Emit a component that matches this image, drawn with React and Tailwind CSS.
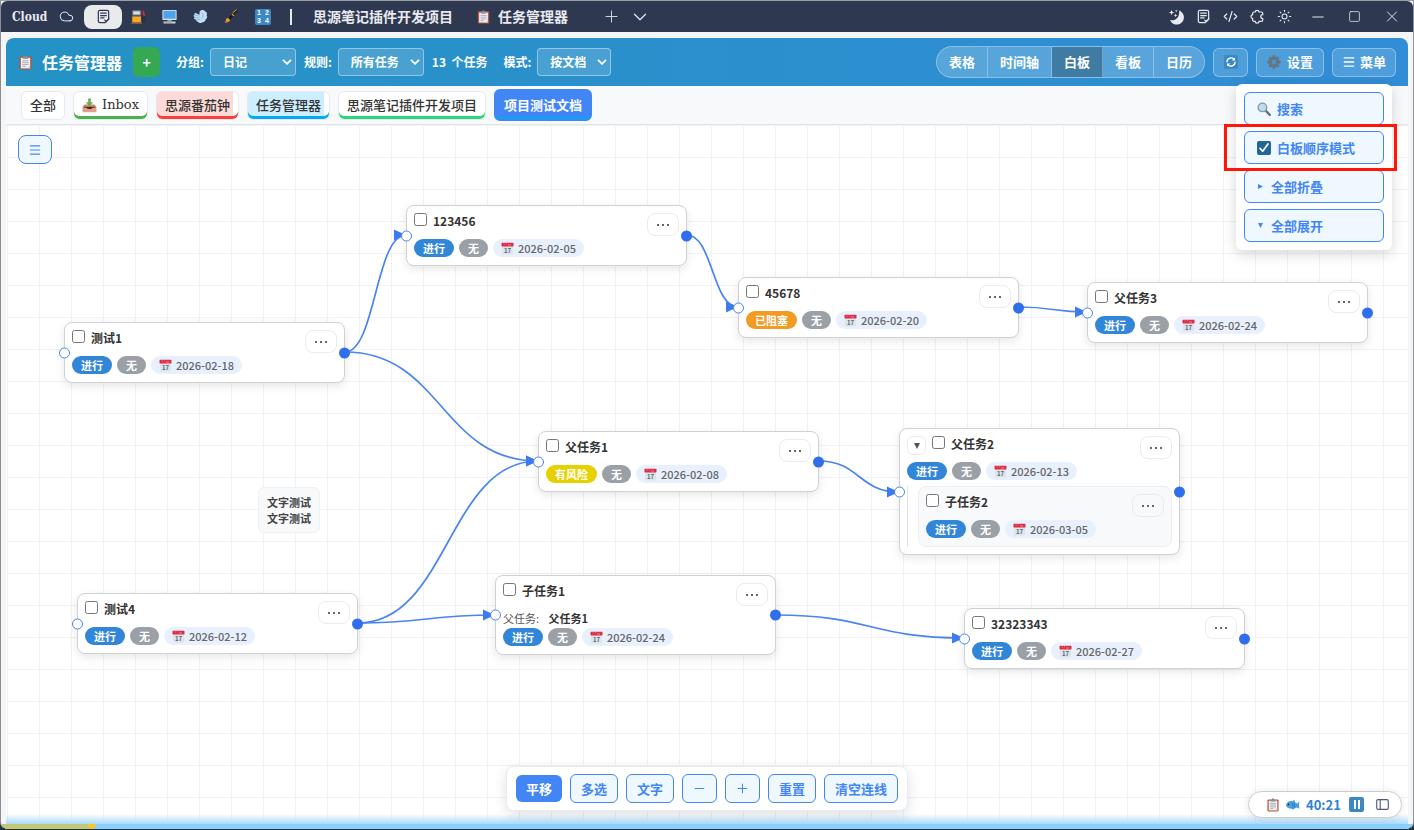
import React from 'react';
import { Cloud, Plus, ChevronDown, X, CodeXml, Sun, Minus, Square, Menu } from 'lucide-react';

/* ---------- small pictograms ---------- */

function ClipboardIcon({ className }) {
  return (
    <svg viewBox="0 0 14 16" className={className} aria-hidden="true">
      <rect x="0.5" y="1.5" width="13" height="14" rx="1.2" fill="#b9553c" />
      <rect x="2" y="3" width="10" height="11.3" fill="#eef1f4" />
      <path d="M4.3 1.6h5.4v2.6H4.3z" fill="#8f9aa3" />
      <circle cx="7" cy="1.4" r="1.2" fill="#7b858d" />
      <path d="M3.6 6.2h6.8M3.6 8.2h6.8M3.6 10.2h6.8M3.6 12.2h3.6" stroke="#98a3ac" strokeWidth="0.9" />
      <path d="M9 14.3 12 11.4v2.9z" fill="#c9d1d8" />
    </svg>
  );
}

function FuelIcon() {
  return (
    <svg viewBox="0 0 16 16" className="size-[15px]" aria-hidden="true">
      <rect x="1" y="1" width="10" height="14" rx="0.8" fill="#4a4f55" />
      <rect x="1.8" y="1.8" width="8.4" height="4.8" fill="#9aa2a8" />
      <rect x="2.6" y="2.8" width="6.8" height="2.6" fill="#d8dde0" />
      <rect x="1.4" y="8" width="9.2" height="6.4" fill="#f8a72b" />
      <rect x="0.4" y="14.4" width="11.2" height="1.4" fill="#8a6a38" />
      <path d="M11 9h1.6v3.6c0 1.6 2 1.6 2 0V5.6L12.4 3" fill="none" stroke="#2b2f33" strokeWidth="1" />
      <path d="M12.2 3.2 13 1l2 4.6-.4 2-2-1z" fill="#d9283c" />
    </svg>
  );
}

function ComputerIcon() {
  return (
    <svg viewBox="0 0 16 16" className="size-[15px]" aria-hidden="true">
      <rect x="0.4" y="1" width="15.2" height="10.6" rx="0.8" fill="#d6e1ea" />
      <rect x="1.5" y="2" width="13" height="8.3" fill="#4ba3ea" />
      <path d="M6 11.6h4l.7 1.6H5.3z" fill="#93a2ad" />
      <rect x="1.5" y="13.2" width="13" height="2.2" rx="0.4" fill="#c7d3dc" />
      <path d="M2.4 14.3h8" stroke="#8c9ba6" strokeWidth="0.7" />
    </svg>
  );
}

function WindIcon() {
  return (
    <svg viewBox="0 0 16 16" className="size-[15px]" aria-hidden="true">
      <path d="M7 3C8 .8 11.400.4 13 2.600c1.800.6 2.400 2.400 1.600 4 1 1.800.4 3.800-1.200 4.600-.4 2-1.800 3-3.400 2.800-1.400 1.400-3.800 1.200-4.600-.4-1.400-.2-2-1-1.800-2L1.600 10.600C.6 10.200.8 9 1.800 9L.9 7.800C.2 7 .8 6 1.800 6.400L1.600 5.400C1.400 4.400 2.400 4 3.200 4.600L7 6.200z" fill="#c3ddf3" />
      <path d="M1.800 9 7 9.600M1.600 6.400 7 7.600M3.600 11.600 8 11M9.600 4c1.400 1.200 1.600 4 .2 6" fill="none" stroke="#6fa6d6" strokeWidth="0.700" />
    </svg>
  );
}

function PenIcon() {
  return (
    <svg viewBox="0 0 16 16" className="size-[15px]" aria-hidden="true">
      <path d="M1 15.200 2.600 10 4.600 9.600 6.400 11.400 6 13z" fill="#eda622" />
      <path d="M1 15.200 4 12.200" stroke="#7a4d0a" strokeWidth="0.600" />
      <path d="M4.600 9.600 6.400 11.400 10.200 7.800 8.200 5.800z" fill="#17191d" />
      <path d="M8.200 5.800 10.200 7.800 11.200 6.800 9.200 4.800z" fill="#eda622" />
      <path d="M9.200 4.800 11.200 6.800 14.800 3C15.200 1.600 14.400.8 13 1.200z" fill="#23262b" />
      <path d="M9.600 3.800 13.200.9" stroke="#eda622" strokeWidth="1" strokeLinecap="round" />
    </svg>
  );
}

function NumbersIcon() {
  return (
    <span className="grid size-4 grid-cols-2 rounded-xs bg-[#3b88c3] text-center font-['Liberation_Sans',sans-serif] text-[7px] leading-[8px] font-bold text-white" aria-hidden="true">
      <span>1</span><span>2</span><span>3</span><span>4</span>
    </span>
  );
}

function InboxIcon() {
  return (
    <svg viewBox="0 0 16 16" className="size-[15px] shrink-0" aria-hidden="true">
      <path d="M0.800 9.400 2.600 7h10.800l1.800 2.400v5.200H.8z" fill="#c98b78" />
      <path d="M2 9.400h12V11H2z" fill="#713228" />
      <path d="M.8 10.400h3.800c.4 1.800 6.400 1.800 6.800 0h3.800v4.800H.8z" fill="#e0a090" />
      <path d="M4.800 9.600h6.400c0 3-6.400 3-6.400 0z" fill="#5b1f1a" />
      <path d="M6.600.6h2.800v4h2.400L8 9.200 4.200 4.600h2.400z" fill="#69ad57" />
    </svg>
  );
}

function DocIcon({ className }) {
  return (
    <svg viewBox="0 0 16 16" className={className} fill="none" stroke="currentColor" strokeWidth="1.300" strokeLinecap="round" strokeLinejoin="round" aria-hidden="true">
      <path d="M4 1.500h8a1.500 1.500 0 0 1 1.500 1.500v7.500L9.800 14.500H4A1.500 1.500 0 0 1 2.500 13V3A1.500 1.500 0 0 1 4 1.500z" />
      <path d="M5 4.500h6M5 7h6M5 9.500h3.500M9.400 12l1.600 1.500 2.800-3" />
    </svg>
  );
}

function MoonIcon() {
  return (
    <svg viewBox="0 0 16 16" className="size-4" fill="currentColor" aria-hidden="true">
      <path d="M11 1.500a7.200 7.200 0 1 1-9 9.500c5.800 1.600 10.200-3.700 9-9.500z" />
      <path d="M3.600.8l.7 2 2 .7-2 .7-.7 2-.7-2-2-.7 2-.7zM7.600 4.500l.5 1.400 1.400.5-1.400.5-.5 1.400-.5-1.400-1.400-.5 1.400-.5zM8.200.4l.4 1 1 .4-1 .4-.4 1-.4-1-1-.4 1-.4z" />
    </svg>
  );
}

function PluginIcon() {
  return (
    <svg viewBox="0 0 16 16" className="size-[15px]" fill="none" stroke="currentColor" strokeWidth="1.300" strokeLinejoin="round" aria-hidden="true">
      <path d="M5.600 3.200a2 1.800 0 0 1 4 0h2.400a1.600 1.600 0 0 1 1.600 1.600v1.200a2.100 2.100 0 0 0 0 4.200v1.400a1.600 1.600 0 0 1-1.600 1.600H9.600a2 1.800 0 0 1-4 0H4.400a1.600 1.600 0 0 1-1.600-1.600v-1.600a1.800 1.900 0 0 1 0-3.800V4.800a1.600 1.600 0 0 1 1.600-1.600z" />
    </svg>
  );
}

function GearIcon() {
  return (
    <svg viewBox="-8 -8 16 16" className="size-[14px]" aria-hidden="true">
      <g fill="#66757f">
        {[0, 45, 90, 135].map((a) => (
          <rect key={a} x="-1.700" y="-7.600" width="3.400" height="15.200" rx="0.800" transform={`rotate(${a})`} />
        ))}
      </g>
      <circle r="4.100" fill="none" stroke="#66757f" strokeWidth="3" />
      <circle r="2.500" fill="#4698d8" />
    </svg>
  );
}

function RefreshIcon() {
  return (
    <svg viewBox="0 0 14 14" className="size-[14px]" aria-hidden="true">
      <rect width="14" height="14" rx="2" fill="#3b88c3" />
      <path d="M2.900 7.200A4.100 4.100 0 0 1 9.700 4M11.100 6.800A4.100 4.100 0 0 1 4.300 10" fill="none" stroke="#fff" strokeWidth="1.300" />
      <path d="M11 2.400v3.200H7.800zM3 11.600V8.400h3.200z" fill="#fff" />
    </svg>
  );
}

function SearchIcon() {
  return (
    <svg viewBox="0 0 14 14" className="size-[14px]" aria-hidden="true">
      <path d="m8.600 8.600 4.200 4.200" stroke="#66757f" strokeWidth="2.400" strokeLinecap="round" />
      <circle cx="5.400" cy="5.400" r="4.300" fill="#bbddf5" stroke="#8899a6" strokeWidth="1.300" />
    </svg>
  );
}

function CalendarIcon() {
  return (
    <svg viewBox="0 0 13 13" className="size-[13px] shrink-0" aria-hidden="true">
      <rect x="1" y="1.500" width="11" height="11" rx="0.800" fill="#dde4ea" />
      <rect x="0.500" y="0.800" width="12" height="3.600" rx="0.600" fill="#dd2e44" />
      <path d="M2.600 2h1M5 1.800h.8M7 3h3" stroke="#f7b8c0" strokeWidth="0.600" />
      <text x="6.500" y="10.500" textAnchor="middle" fontSize="6" fontWeight="700" fill="#58656e">17</text>
    </svg>
  );
}

function FishIcon() {
  return (
    <svg viewBox="0 0 16 14" className="h-[13px] w-[15px]" aria-hidden="true">
      <path d="M.8 7.800C2 4 5 2.600 8 3.400l1.600-1.900 1.500 3.300c.7.300 1.300.7 1.900 1.100l2.500-2-.5 3.900.5 3.800-3-1.400c-.8.600-1.700 1-2.600 1.200L8.600 13l-1.400-1.400C3.800 11.600 1.600 10 .8 7.800z" fill="#4a9fe3" />
      <path d="M7.500 4.800c1 1.800 1 4 0 5.600M10 5.600v4.600" fill="none" stroke="#2b6fb0" strokeWidth="0.800" />
      <circle cx="3.700" cy="6.800" r="0.900" fill="#14212c" />
    </svg>
  );
}

/* ---------- title bar ---------- */

const iconBtn = 'flex h-6 items-center justify-center';

function TitleBar() {
  return (
    <header className="flex h-[31px] shrink-0 items-center rounded-t-md bg-[#2f3851] text-[#e8eaef]">
      <span className="ml-[11px] w-9 font-['DejaVu_Serif_Condensed','DejaVu_Serif',serif] text-[12px] font-bold">Cloud</span>
      <button aria-label="同步" className={`${iconBtn} ml-[11px]`}><Cloud className="size-[15px]" strokeWidth={1.6} /></button>
      <button aria-label="文档" className="ml-[10px] flex h-6 w-[38px] items-center justify-center rounded-lg bg-[#e9eaec] text-[#2f3851]">
        <DocIcon className="size-[15px]" />
      </button>
      <nav className="ml-[9px] flex items-center gap-4">
        <button aria-label="加油" className={iconBtn}><FuelIcon /></button>
        <button aria-label="电脑" className={iconBtn}><ComputerIcon /></button>
        <button aria-label="风" className={iconBtn}><WindIcon /></button>
        <button aria-label="钢笔" className={iconBtn}><PenIcon /></button>
        <button aria-label="数字" className={iconBtn}><NumbersIcon /></button>
      </nav>
      <span className="ml-[19px] h-4 w-[2px] bg-[#e8eaef]" />
      <button className="ml-[21px] text-[14px] font-bold">思源笔记插件开发项目</button>
      <button className="ml-6 flex items-center gap-2 text-[14px] font-bold">
        <ClipboardIcon className="h-[14px] w-[13px]" />
        任务管理器
      </button>
      <button aria-label="新建标签" className={`${iconBtn} ml-[34px]`}><Plus className="size-[19px]" strokeWidth={1.100} /></button>
      <button aria-label="更多标签" className={`${iconBtn} ml-2`}><ChevronDown className="size-[22px]" strokeWidth={1.300} /></button>

      <div className="ml-auto flex items-center">
        <div className="flex items-center gap-3">
          <button aria-label="主题" className={iconBtn}><MoonIcon /></button>
          <button aria-label="笔记" className={iconBtn}><DocIcon className="size-[15px]" /></button>
          <button aria-label="代码" className={iconBtn}><CodeXml className="size-[15px]" strokeWidth={1.900} /></button>
          <button aria-label="插件" className={iconBtn}><PluginIcon /></button>
          <button aria-label="外观" className={iconBtn}><Sun className="size-[15px]" strokeWidth={1.700} /></button>
        </div>
        <button aria-label="最小化" className={`${iconBtn} ml-[17px] w-[18px]`}><Minus className="size-[18px]" strokeWidth={1.300} /></button>
        <button aria-label="最大化" className={`${iconBtn} ml-5 w-[14px]`}><Square className="size-[13px]" strokeWidth={1.400} /></button>
        <button aria-label="关闭" className={`${iconBtn} mr-3 ml-[22px] w-[18px]`}><X className="size-[19px]" strokeWidth={1.300} /></button>
      </div>
    </header>
  );
}

/* ---------- task manager header ---------- */

function LabeledSelect({ id, label, value, className }) {
  return (
    <div className="flex items-center gap-[6px]">
      <label htmlFor={id} className="text-[12px] font-bold">{label}</label>
      <div className={`relative ${className}`}>
        <select id={id} defaultValue={value} className="h-7 w-full appearance-none rounded border border-white/40 bg-white/15 pl-3 text-[12px] font-bold text-white">
          <option>{value}</option>
        </select>
        <svg viewBox="0 0 10 6" className="pointer-events-none absolute top-[11px] right-1 h-[6px] w-[10px]" aria-hidden="true">
          <path d="m1 .8 4 4 4-4" fill="none" stroke="#fff" strokeWidth="1.800" />
        </svg>
      </div>
    </div>
  );
}

const VIEWS = ['表格', '时间轴', '白板', '看板', '日历'];
const headerBtn = 'flex h-[29px] items-center justify-center rounded-md border border-white/35 bg-white/15 text-[13px] font-bold';
const menuBtn = 'flex h-[33px] w-full items-center rounded-md border border-[#4285f4] bg-[#f0f8ff] pl-3 text-[13px] font-bold text-[#4285f4]';

function ManagerHeader() {
  return (
    <div className="relative z-20 flex h-12 shrink-0 items-center rounded-t-lg bg-linear-to-r from-[#2492c4] to-[#318dd6] px-3 text-white">
      <ClipboardIcon className="ml-px h-[15px] w-[13px]" />
      <h1 className="ml-[10px] text-[16px] font-bold">任务管理器</h1>
      <button aria-label="新建任务" className="ml-[11px] h-[30px] w-[27px] rounded-md bg-[#34a853] text-[14px] font-bold">+</button>
      <div className="ml-4 flex items-center gap-2">
        <LabeledSelect id="group" label="分组:" value="日记" className="w-[86px]" />
        <LabeledSelect id="rule" label="规则:" value="所有任务" className="w-[86px]" />
        <span className="text-[12px] font-bold whitespace-pre">13  个任务</span>
      </div>
      <div className="ml-4">
        <LabeledSelect id="mode" label="模式:" value="按文档" className="w-[74px]" />
      </div>

      <div className="ml-auto flex items-center gap-2">
        <div className="flex h-8 divide-x divide-white/30 overflow-hidden rounded-full border border-white/30 bg-white/20 text-[13px] font-bold">
          {VIEWS.map((v) => (
            <button key={v} className={v === '白板' ? 'bg-[#3f7ba3] px-3' : 'px-3'}>{v}</button>
          ))}
        </div>
        <button aria-label="刷新" className={`${headerBtn} w-[35px]`}><RefreshIcon /></button>
        <button className={`${headerBtn} w-[68px] gap-[6px]`}><GearIcon />设置</button>
        <button className={`${headerBtn} w-16 gap-1`}><Menu className="size-[14px]" strokeWidth={2.400} />菜单</button>
      </div>

      <div className="absolute top-[46px] right-4 w-[156px] rounded-md bg-white p-2 shadow-[0_4px_14px_rgba(0,0,0,0.16)]">
        <div className="flex flex-col gap-[6px]">
          <button className={`${menuBtn} gap-[6px]`}><SearchIcon />搜索</button>
          <label className={menuBtn}>
            <input type="checkbox" defaultChecked className="peer sr-only" />
            <svg viewBox="0 0 14 14" className="mr-[6px] size-[14px] rounded-xs bg-white peer-checked:bg-[#226699]" aria-hidden="true">
              <path d="m3 7.300 2.700 3L11 3" fill="none" stroke="#fff" strokeWidth="1.700" strokeLinecap="round" strokeLinejoin="round" />
            </svg>
            白板顺序模式
          </label>
          <button className={`${menuBtn} gap-2`}>
            <svg viewBox="0 0 6 6" className="ml-[1px] size-[5px]" fill="currentColor" aria-hidden="true"><path d="M0 0v6l6-3z" /></svg>
            全部折叠
          </button>
          <button className={`${menuBtn} gap-2`}>
            <svg viewBox="0 0 6 6" className="ml-[1px] size-[5px]" fill="currentColor" aria-hidden="true"><path d="M0 0h6L3 6z" /></svg>
            全部展开
          </button>
        </div>
        <div className="pointer-events-none absolute top-10 -right-[5px] -left-3 h-[47px] border-3 border-[#ff1608]" />
      </div>
    </div>
  );
}

/* ---------- document tabs ---------- */

const tab = 'flex h-[29px] items-center gap-[5px] overflow-hidden rounded-md border border-[#e6e9ed] px-2 text-[13px] font-medium text-[#333] whitespace-nowrap';

function DocTabs() {
  return (
    <div className="flex h-[39px] shrink-0 items-center gap-2 border-b border-[#e1e5ea] bg-[#f8f9fb] pl-[15px]">
      <button className={`${tab} bg-white`}>全部</button>
      <button className={`${tab} bg-white shadow-[inset_0_-3px_0_#4caf50]`}>
        <InboxIcon /><span className="font-['DejaVu_Serif',serif] font-normal">Inbox</span>
      </button>
      <button className={`${tab} bg-linear-[90deg,#fdd9d7_94%,#fff_94%] shadow-[inset_0_-3px_0_#f44336]`}>思源番茄钟</button>
      <button className={`${tab} bg-linear-[90deg,#cdeefe_94%,#fff_94%] shadow-[inset_0_-3px_0_#03a9f4]`}>任务管理器</button>
      <button className={`${tab} bg-white shadow-[inset_0_-3px_0_#2bd47d]`}>思源笔记插件开发项目</button>
      <button className="h-8 rounded-md border-2 border-[#4285f4] bg-[#4285f4] px-2 text-[13px] font-bold text-white shadow-[inset_0_-2px_0_#03a9f4]">项目测试文档</button>
    </div>
  );
}

/* ---------- board ---------- */

const STATUS = {
  进行: 'bg-[#3286d8]',
  已阻塞: 'bg-[#f29b22]',
  有风险: 'bg-[#e5d000]',
};

const NODES = [
  { id: 'a', x: 58, y: 197, title: '测试1', status: '进行', date: '2026-02-18' },
  { id: 'b', x: 400, y: 80, title: '123456', status: '进行', date: '2026-02-05' },
  { id: 'c', x: 732, y: 152, title: '45678', status: '已阻塞', date: '2026-02-20' },
  { id: 'd', x: 1081, y: 157, title: '父任务3', status: '进行', date: '2026-02-24' },
  { id: 'e', x: 532, y: 306, title: '父任务1', status: '有风险', date: '2026-02-08' },
  { id: 'f', x: 893, y: 303, title: '父任务2', status: '进行', date: '2026-02-13', child: { id: 'g', title: '子任务2', status: '进行', date: '2026-03-05' } },
  { id: 'h', x: 489, y: 450, title: '子任务1', status: '进行', date: '2026-02-24', parent: '父任务1' },
  { id: 'i', x: 958, y: 483, title: '32323343', status: '进行', date: '2026-02-27' },
  { id: 'j', x: 71, y: 468, title: '测试4', status: '进行', date: '2026-02-12' },
];

const CARD_W = 281;
const LINKS = [['a', 'b'], ['b', 'c'], ['c', 'd'], ['a', 'e'], ['j', 'e'], ['e', 'f'], ['j', 'h'], ['h', 'i']];

function portY(n) {
  return n.y + (n.child ? 64 : n.parent ? 40 : 30);
}

function Links() {
  const byId = Object.fromEntries(NODES.map((n) => [n.id, n]));
  return (
    <svg className="pointer-events-none absolute inset-0 h-full w-full" aria-hidden="true">
      {LINKS.map(([from, to]) => {
        const x1 = byId[from].x + CARD_W;
        const y1 = portY(byId[from]);
        const x2 = byId[to].x;
        const y2 = portY(byId[to]);
        const m = (x1 + x2) / 2;
        return (
          <g key={from + to}>
            <path d={`M${x1} ${y1}C${m} ${y1} ${m} ${y2} ${x2} ${y2}`} fill="none" stroke="#4a83f2" strokeWidth="1.700" />
            <path d={`M${x2 - 12} ${y2 - 5.5}v11L${x2} ${y2}z`} fill="#3f7bf0" />
          </g>
        );
      })}
    </svg>
  );
}

function CardBody({ item, fold }) {
  return (
    <>
      <div className="flex h-[23px] items-start">
        {fold && (
          <button aria-label="折叠" className="mr-[6px] flex size-[19px] items-center justify-center rounded-md border border-[#e9ecef]">
            <svg viewBox="0 0 6 6" className="size-[6px]" fill="#555" aria-hidden="true"><path d="M0 0h6L3 6z" /></svg>
          </button>
        )}
        <input id={`task-${item.id}`} type="checkbox" className="size-[13px]" />
        <label htmlFor={`task-${item.id}`} className="ml-[6px] text-[12px] leading-4 font-bold text-[#333]">{item.title}</label>
        <button aria-label="更多操作" className="ml-auto flex h-[23px] w-8 items-center justify-center gap-[3px] rounded-lg border border-[#e9ecef] text-[#666]">
          <span className="size-[2px] bg-current" /><span className="size-[2px] bg-current" /><span className="size-[2px] bg-current" />
        </button>
      </div>
      {item.parent && (
        <p className="-mb-[3px] pt-[3px] text-[11px] leading-[19px] text-[#555]">
          父任务: <b className="ml-[7px] text-[#333]">{item.parent}</b>
        </p>
      )}
      <div className="mt-[3px] flex items-center gap-[5px] text-[11px] leading-[18px]">
        <span className={`rounded-full px-[9px] font-bold text-white ${STATUS[item.status]}`}>{item.status}</span>
        <span className="rounded-full bg-[#9aa0a6] px-[9px] font-bold text-white">无</span>
        <span className="flex items-center gap-1 rounded-full bg-[#e8f0fe] px-2 font-medium text-[#666]"><CalendarIcon />{item.date}</span>
      </div>
    </>
  );
}

function Node({ node }) {
  return (
    <article
      className="absolute w-[281px] rounded-lg border border-[#cfd1d3] bg-white px-[7px] pt-[7px] pb-2 shadow-[0_3px_10px_rgba(0,0,0,0.1)]"
      style={{ left: node.x, top: node.y }}
    >
      <CardBody item={node} fold={Boolean(node.child)} />
      {node.child && (
        <div className="mt-[6px] -mb-px border-l border-[#dfe2e6] pl-[10px]">
          <div className="rounded-lg border border-[#eceff2] bg-[#f8f9fb] px-[7px] pt-[7px] pb-2">
            <CardBody item={node.child} />
          </div>
        </div>
      )}
      <span className="absolute top-1/2 -left-[6px] size-[11px] -translate-y-1/2 rounded-full border border-[#4a83f2] bg-white" />
      <span className="absolute top-1/2 -right-[6px] size-[11px] -translate-y-1/2 rounded-full bg-[#2f6fee]" />
    </article>
  );
}

const toolBtn = 'flex h-[29px] items-center justify-center rounded-md border border-[#4285f4] bg-[#f0f8ff] px-[10px] text-[13px] font-bold text-[#4285f4]';

function Board() {
  return (
    <main className="relative min-h-0 flex-1 overflow-hidden bg-white bg-[linear-gradient(#f1f2f3_1px,transparent_1px),linear-gradient(90deg,#f1f2f3_1px,transparent_1px)] bg-size-[32px_32px] bg-position-[1px_0]">
      <Links />
      {NODES.map((n) => <Node key={n.id} node={n} />)}

      <div className="absolute top-[362px] left-[252px] rounded-md border border-[#eef0f2] bg-[#f8f9fb] px-[8px] py-[6px] text-[11px] leading-4 font-bold text-[#444]">
        文字测试<br />文字测试
      </div>

      <button aria-label="侧栏" className="absolute top-[10px] left-3 flex h-[29px] w-[34px] items-center justify-center rounded-lg border border-[#4285f4] bg-[#f0f8ff] text-[#4285f4]">
        <Menu className="size-[14px]" strokeWidth={2} />
      </button>

      <div className="pointer-events-none absolute inset-x-0 bottom-0 h-[10px] bg-linear-to-b from-transparent to-[#a9dafd]" />

      <div className="absolute inset-x-0 bottom-[13px] flex justify-center">
        <div className="flex items-center gap-2 rounded-lg border border-[#e9ecef] bg-white px-[9px] py-[7px] shadow-[0_4px_14px_rgba(0,0,0,0.12)]">
          <button className="h-[27px] rounded-md bg-[#4285f4] px-[10px] text-[13px] font-bold text-white">平移</button>
          <button className={toolBtn}>多选</button>
          <button className={toolBtn}>文字</button>
          <button aria-label="缩小" className={toolBtn}><Minus className="-mx-px size-[15px]" strokeWidth={1.600} /></button>
          <button aria-label="放大" className={toolBtn}><Plus className="-mx-px size-[15px]" strokeWidth={1.600} /></button>
          <button className={toolBtn}>重置</button>
          <button className={toolBtn}>清空连线</button>
        </div>
      </div>

      <div className="absolute right-[6px] bottom-[6px] flex h-[27px] w-[154px] items-center rounded-full border border-[#c9ccd0] bg-white pl-[18px] shadow-[0_1px_8px_rgba(0,0,0,0.1)]">
        <ClipboardIcon className="h-[14px] w-3" />
        <span className="ml-[6px]"><FishIcon /></span>
        <time className="ml-[6px] w-[38px] text-[13px] font-bold text-[#2f83d0]">40:21</time>
        <button aria-label="暂停" className="ml-[5px] flex size-[15px] items-center justify-center gap-[2px] rounded-xs bg-[#3b88c3]">
          <span className="h-[9px] w-[2px] bg-white" /><span className="h-[9px] w-[2px] bg-white" />
        </button>
        <button aria-label="面板" className="ml-3">
          <svg viewBox="0 0 14 12" className="h-[11px] w-[13px]" fill="none" stroke="#4b5878" strokeWidth="1.200" aria-hidden="true">
            <rect x="0.700" y="0.700" width="12.600" height="10.600" rx="1.500" /><path d="M4.500 1v10" />
          </svg>
        </button>
      </div>
    </main>
  );
}

export default function App() {
  return (
    <div className="h-screen bg-[#24313d] font-['Noto_Sans_CJK_SC',sans-serif]">
      <div className="flex h-full flex-col overflow-hidden rounded-b-lg border border-t-[#9aa0a4] border-r-[#8b9299] border-b-[#24313d] border-l-[#8b8d90] bg-[#f4f5f6]">
        <TitleBar />
        <div className="mx-[5px] mt-[6px] flex min-h-0 flex-1 flex-col">
          <ManagerHeader />
          <DocTabs />
          <Board />
        </div>
        <footer className="flex h-[5px] shrink-0 bg-[#87d0fb]">
          <div className="h-full w-[90px] bg-[#c3c878]" />
          <svg viewBox="0 0 10 5" className="-ml-[4px] h-[5px] w-[10px]" aria-hidden="true"><path d="M0 0h10L6 5H4z" fill="#fcc726" /></svg>
        </footer>
      </div>
    </div>
  );
}
